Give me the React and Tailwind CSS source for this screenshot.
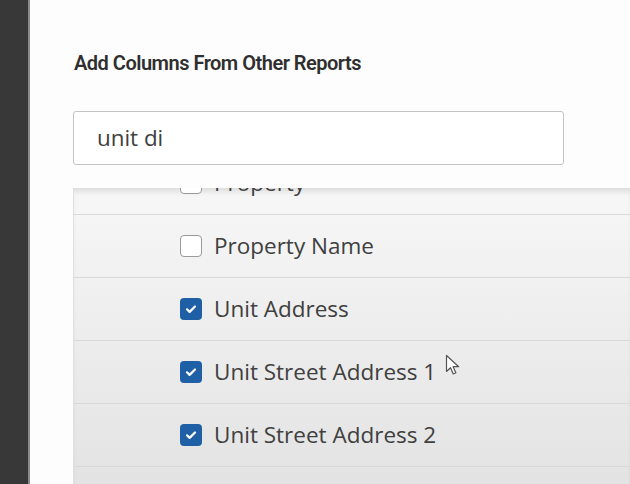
import React from "react";

function Box({ checked }) {
  if (checked) {
    return (
      <span className="flex h-[22px] w-[22px] shrink-0 items-center justify-center rounded-[4px] bg-[#1f5fa5]">
        <svg width="14" height="14" viewBox="0 0 14 14" fill="none">
          <path d="M3 7.3l2.6 2.6L11 4.5" stroke="white" strokeWidth="2.2" strokeLinecap="round" strokeLinejoin="round" />
        </svg>
      </span>
    );
  }
  return <span className="h-[22px] w-[22px] shrink-0 rounded-[4px] border-[1.5px] border-[#9a9a9a] bg-white" />;
}

function Row({ label, checked }) {
  return (
    <div className="flex h-[63px] items-center gap-[12px] border-b border-[#d9d9d9] pl-[106px]">
      <Box checked={checked} />
      <span className="text-[22.5px] text-[#404040]">{label}</span>
    </div>
  );
}

export default function App() {
  return (
    <div className="flex h-[484px] w-[630px] overflow-hidden bg-white" style={{ fontFamily: '"Open Sans", Arial, sans-serif' }}>
      <div className="w-[30px] shrink-0 bg-[#383838] border-r-2 border-[#8a8a8a]" />
      <div className="relative flex flex-1 flex-col bg-[#fdfdfd]">
        <h2 className="ml-[44px] mt-[49px] text-[20px] font-semibold leading-[28px] tracking-[-0.5px] text-[#2f2f2f]" style={{ fontFamily: 'Roboto, "Noto Sans", sans-serif' }}>
          Add Columns From Other Reports
        </h2>
        <div className="ml-[43px] mt-[34px] flex h-[54px] w-[491px] items-center rounded-[3px] border border-[#c4c4c4] bg-white pl-[23px] text-[22.4px] text-[#404040]">
          unit di
        </div>
        <div className="relative ml-[43px] mt-[23px] flex-1 overflow-hidden border-l border-[#e0e0e0] bg-gradient-to-b from-[#f7f7f7] to-[#e3e3e3] shadow-[inset_0_6px_6px_-3px_rgba(0,0,0,0.12)]">
          <div className="mt-[-36px]">
            <Row label="Property" checked={false} />
            <Row label="Property Name" checked={false} />
            <Row label="Unit Address" checked />
            <Row label="Unit Street Address 1" checked />
            <Row label="Unit Street Address 2" checked />
          </div>
          <svg className="absolute left-[371px] top-[166px]" width="16" height="22" viewBox="0 0 16 22" fill="none">
            <path d="M1.5 1.5v16l4-3.8 2.8 6.3 2.6-1.2-2.8-6.1h5.6z" fill="white" stroke="#555" strokeWidth="1.2" strokeLinejoin="round" />
          </svg>
        </div>
      </div>
    </div>
  );
}
